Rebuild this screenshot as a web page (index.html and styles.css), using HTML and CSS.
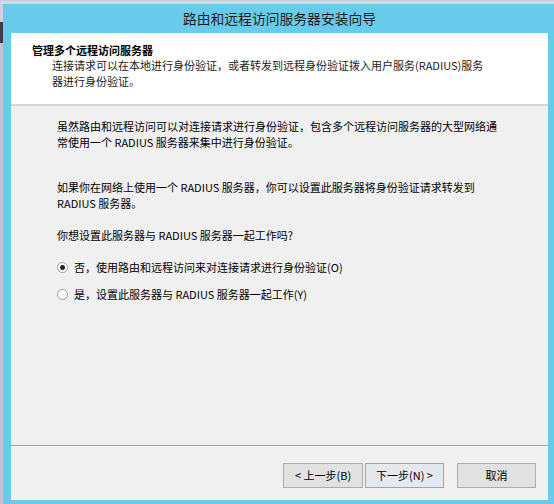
FILE: index.html
```html
<!DOCTYPE html>
<html lang="zh-CN">
<head>
<meta charset="utf-8">
<title>路由和远程访问服务器安装向导</title>
<link rel="stylesheet" href="styles.css">
</head>
<body>
<div class="desk">
  <div class="desk-left">
    <div class="dl-a"></div>
    <div class="dl-b"></div>
    <div class="dl-c"></div>
  </div>
  <div class="window">
    <div class="titlebar">路由和远程访问服务器安装向导</div>
    <div class="client">
      <div class="header">
        <div class="h-title">管理多个远程访问服务器</div>
        <div class="h-sub">连接请求可以在本地进行身份验证，或者转发到远程身份验证拨入用户服务(RADIUS)服务<br>器进行身份验证。</div>
      </div>
      <div class="content">
        <p class="para p1">虽然路由和远程访问可以对连接请求进行身份验证，包含多个远程访问服务器的大型网络通<br>常使用一个 RADIUS 服务器来集中进行身份验证。</p>
        <p class="para p2">如果你在网络上使用一个 RADIUS 服务器，你可以设置此服务器将身份验证请求转发到<br>RADIUS 服务器。</p>
        <p class="para p3">你想设置此服务器与 RADIUS 服务器一起工作吗?</p>
        <div class="option o1"><span class="radio checked"></span><span>否，使用路由和远程访问来对连接请求进行身份验证(O)</span></div>
        <div class="option o2"><span class="radio"></span><span>是，设置此服务器与 RADIUS 服务器一起工作(Y)</span></div>
      </div>
      <div class="footer">
        <button class="btn b-back">&lt; 上一步(B)</button>
        <button class="btn b-next">下一步(N) &gt;</button>
        <button class="btn b-cancel">取消</button>
      </div>
    </div>
  </div>
</div>
</body>
</html>
```
FILE: styles.css
```css
html, body {
  margin: 0;
  padding: 0;
}
body {
  width: 554px;
  height: 504px;
  overflow: hidden;
  background: #d3d8e6;
  font-family: "Noto Sans CJK SC", "Noto Sans", sans-serif;
  color: #000;
}
.desk {
  display: flex;
  width: 554px;
  height: 504px;
  padding-top: 3px;
  box-sizing: border-box;
  border-top: 1px solid #c8ccd6;
}
.desk-left {
  width: 3px;
  display: flex;
  flex-direction: column;
  background: #c6ced4;
}
.dl-a { height: 18px; background: #cbd4da; }
.dl-b { height: 21px; background: #3c3c3c; }
.dl-c { flex: 1; background: #bfc6cc; }
.window {
  width: 551px;
  height: 501px;
  background: #69cbeb;
  display: flex;
  flex-direction: column;
}
.titlebar {
  height: 29px;
  display: flex;
  align-items: center;
  justify-content: center;
  padding-left: 2px;
  font-size: 13.8px;
  color: #1e1e1e;
  line-height: 1;
}
.client {
  flex: 1;
  margin: 0 6px 5px 8px;
  background: #f0f0f0;
  display: flex;
  flex-direction: column;
}
.header {
  height: 71px;
  background: #fff;
  border-bottom: 2px solid #d5d5d5;
  box-sizing: content-box;
  padding-left: 21px;
  font-size: 11px;
  line-height: 16px;
}
.h-title {
  font-weight: bold;
  padding-top: 10px;
  line-height: 14px;
}
.h-sub {
  padding-left: 20px;
  color: #1a1a1a;
}
.content {
  flex: 1;
  padding: 12px 0 0 46px;
  font-size: 11px;
  line-height: 16px;
}
.para {
  margin: 0;
  white-space: nowrap;
}
.p2 { margin-top: 29px; }
.p3 { margin-top: 16px; }
.option {
  display: flex;
  align-items: center;
  gap: 6px;
  height: 16px;
  white-space: nowrap;
}
.o1 { margin-top: 16px; }
.o2 { margin-top: 11px; }
.radio {
  width: 9px;
  height: 9px;
  border: 1px solid #9a9a9a;
  border-radius: 50%;
  background: #fff;
  position: relative;
  flex: none;
}
.radio.checked::after {
  content: "";
  position: absolute;
  left: 2px;
  top: 2px;
  width: 5px;
  height: 5px;
  border-radius: 50%;
  background: #222;
}
.footer {
  height: 55px;
  border-top: 1px solid #a0a0a0;
  box-shadow: inset 0 1px 0 #fff;
  box-sizing: border-box;
  display: flex;
  align-items: flex-start;
  padding: 17px 12px 0 0;
  justify-content: flex-end;
}
.btn {
  height: 25px;
  width: 79px;
  padding: 0;
  margin: 0;
  background: #e1e1e1;
  border: 1px solid #adadad;
  font-family: "Noto Sans CJK SC", "Noto Sans", sans-serif;
  font-size: 11px;
  color: #000;
  line-height: 1;
}
.b-back { width: 80px; }
.b-next {
  margin-left: 2px;
  border-color: #7aaedb;
  background: #e5e8ec;
}
.b-cancel { margin-left: 13px; }
```
